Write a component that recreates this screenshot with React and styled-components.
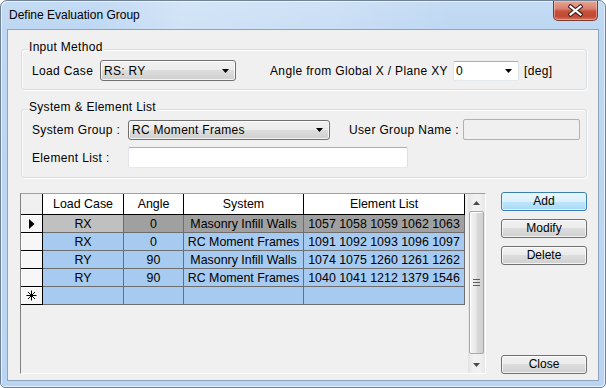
import React from 'react';
import styled, { createGlobalStyle } from 'styled-components';

const GlobalStyle = createGlobalStyle`
  html, body { margin: 0; padding: 0; background: #ffffff; }
  body { font-family: "Liberation Sans", Arial, sans-serif; font-size: 12px; color: #000; }
  *, *::before, *::after { box-sizing: border-box; }
`;

const Window = styled.div`
  width: 606px;
  height: 388px;
  border: 1px solid #6f8298;
  border-radius: 7px 7px 5px 5px;
  background: linear-gradient(180deg, #c4dbf4 0px, #bed7f2 30px, #bad5f3 100%);
  box-shadow: inset 1px 1px 0 #e6f0fb, inset -1px -1px 0 #e6f0fb;
  padding: 0 6px 6px 6px;
  display: flex;
  flex-direction: column;
  overflow: hidden;
`;

const TitleBar = styled.div`
  height: 28px;
  display: flex;
  align-items: center;
  margin: 0 -6px;
  padding: 0 7px 0 8px;
  background: linear-gradient(100deg, rgba(255,255,255,0) 15%, rgba(255,255,255,0.28) 30%, rgba(255,255,255,0.18) 55%, rgba(255,255,255,0) 75%);
`;

const Title = styled.span`
  line-height: 14px;
  color: #000;
`;

const CloseBtn = styled.div`
  margin-left: auto;
  align-self: flex-start;
  width: 45px;
  height: 20px;
  border: 1px solid #7a3a30;
  border-top: none;
  border-radius: 0 0 5px 5px;
  background: linear-gradient(180deg, #e8a595 0%, #d98271 40%, #c8503a 55%, #c24a33 80%, #d2725c 100%);
  box-shadow: inset 0 0 0 1px rgba(255, 220, 210, 0.45);
  display: flex;
  align-items: center;
  justify-content: center;
`;

const Client = styled.div`
  flex: 1;
  background: #f0f0f0;
  border: 1px solid #8fa3bb;
  display: flex;
  flex-direction: column;
  padding: 19px 11px 6px 13px;
`;

const GroupBox = styled.div`
  position: relative;
  border: 1px solid #d5dfe5;
  border-radius: 3px;
  box-shadow: inset 1px 1px 0 #ffffff, 1px 1px 0 #ffffff;
  padding: ${p => p.$pad};
  display: flex;
  flex-direction: column;
  gap: ${p => p.$gap || 0}px;
  & + & { margin-top: 19px; }
`;

const Caption = styled.span`
  position: absolute;
  top: -10px;
  left: 6px;
  padding: 0 1px;
  background: #f0f0f0;
  line-height: 14px;
  letter-spacing: 0.3px;
  white-space: nowrap;
`;

const Row = styled.div`
  display: flex;
  align-items: center;
  height: 21px;
`;

const Label = styled.span`
  width: ${p => (p.$w ? `${p.$w}px` : 'auto')};
  margin-left: ${p => p.$ml || 0}px;
  flex-shrink: 0;
  line-height: 14px;
  letter-spacing: 0.35px;
  white-space: nowrap;
`;

const ComboButton = styled.div`
  width: ${p => p.$w}px;
  height: ${p => p.$h}px;
  border: 1px solid #707070;
  border-radius: 3px;
  background: linear-gradient(180deg, #f2f2f2 0%, #ebebeb 50%, #dddddd 50%, #cfcfcf 100%);
  box-shadow: inset 0 0 0 1px rgba(255, 255, 255, 0.75);
  display: flex;
  align-items: center;
  justify-content: space-between;
  padding: 0 6px 0 3px;
  letter-spacing: 0.3px;
  line-height: 14px;
`;

const ComboEdit = styled.div`
  width: ${p => p.$w}px;
  height: ${p => p.$h}px;
  background: #ffffff;
  border: 1px solid;
  border-color: #abadb3 #dbdfe6 #e3e9ef #e2e3ea;
  border-radius: 2px;
  display: flex;
  align-items: center;
  justify-content: space-between;
  padding: 0 6px 0 2px;
  line-height: 14px;
`;

const TextBox = styled.div`
  width: ${p => p.$w}px;
  height: 21px;
  margin-left: ${p => p.$ml || 0}px;
  background: ${p => (p.$disabled ? '#f0f0f0' : '#ffffff')};
  border: 1px solid;
  border-color: ${p => (p.$disabled ? '#adb2b5' : '#abadb3 #dbdfe6 #e3e9ef #e2e3ea')};
  border-radius: 2px;
`;

const Bottom = styled.div`
  margin-top: 15px;
  margin-left: -1px;
  display: flex;
  gap: 15px;
  height: 181px;
`;

const Grid = styled.div`
  width: 466px;
  height: 181px;
  border: 1px solid;
  border-color: #a0a0a0 #ffffff #ffffff #808080;
  background: #f0f0f0;
  display: flex;
  font-size: 12.4px;
`;

const Table = styled.div`
  width: 447px;
  display: grid;
  grid-template-columns: 22px 81px 60px 120px 161px;
  grid-template-rows: 21px;
  grid-auto-rows: 18px;
  align-content: start;
`;

const HeaderCell = styled.div`
  background: ${p => (p.$corner ? '#f0f0f0' : '#ffffff')};
  border-right: 1px solid #000;
  border-bottom: 1px solid #000;
  text-align: center;
  line-height: 19px;
  padding-top: 1px;
  white-space: nowrap;
`;

const RowHeader = styled.div`
  background: #f7f7f7;
  border-right: 1px solid #000;
  border-bottom: 1px solid #000;
  box-shadow: inset 1px 1px 0 #ffffff;
  display: flex;
  align-items: center;
  justify-content: center;
`;

const Cell = styled.div`
  background: ${p => p.$bg};
  border-right: 1px solid #6e6e6e;
  border-bottom: 1px solid #6e6e6e;
  text-align: center;
  line-height: 15px;
  padding-top: 2px;
  white-space: nowrap;
  overflow: hidden;
`;

const ScrollBar = styled.div`
  width: 17px;
  display: flex;
  flex-direction: column;
  background: linear-gradient(90deg, #e3e3e3 0%, #f1f1f1 30%, #f1f1f1 70%, #e6e6e6 100%);
`;

const ScrollArrow = styled.div`
  height: 17px;
  display: flex;
  align-items: center;
  justify-content: center;
  flex-shrink: 0;
`;

const Thumb = styled.div`
  height: 143px;
  margin: 0 1px;
  border: 1px solid #a9a9a9;
  border-radius: 2px;
  background: linear-gradient(90deg, #f4f4f4 0%, #e9e9e9 45%, #d9d9d9 55%, #d0d0d0 100%);
  box-shadow: inset 1px 1px 0 #ffffff;
  display: flex;
  align-items: center;
  justify-content: center;
`;

const Track = styled.div`
  flex: 1;
`;

const ButtonCol = styled.div`
  width: 86px;
  margin-top: -1px;
  display: flex;
  flex-direction: column;
  gap: 8px;
`;

const Button = styled.button`
  width: 86px;
  height: 19px;
  padding: 0;
  margin: 0;
  font-family: inherit;
  font-size: 12px;
  line-height: 15px;
  color: #000;
  border: 1px solid ${p => (p.$default ? '#3c7fb1' : '#707070')};
  border-radius: 3px;
  background: ${p =>
    p.$default
      ? 'linear-gradient(180deg, #eaf6fd 0%, #d9f0fc 50%, #bee6fd 50%, #a7d9f5 100%)'
      : 'linear-gradient(180deg, #f2f2f2 0%, #ebebeb 50%, #dddddd 50%, #cfcfcf 100%)'};
  box-shadow: inset 0 0 0 1px ${p => (p.$default ? 'rgba(220,245,255,0.9)' : 'rgba(255,255,255,0.75)')};
  &:last-child { margin-top: auto; }
`;

const DropArrow = () => (
  <svg width="7" height="4" viewBox="0 0 7 4">
    <path d="M0 0H7L3.5 4Z" fill="#000" />
  </svg>
);

const CloseIcon = () => (
  <svg width="15" height="13" viewBox="0 0 15 13">
    <path d="M2.5 2.5L12.5 10.5M12.5 2.5L2.5 10.5" stroke="#3a1f1a" strokeWidth="4.2" strokeLinecap="square" />
    <path d="M2.5 2.5L12.5 10.5M12.5 2.5L2.5 10.5" stroke="#ffffff" strokeWidth="2.2" strokeLinecap="square" />
  </svg>
);

const CurrentMark = () => (
  <svg width="6" height="10" viewBox="0 0 6 10">
    <path d="M0 0L5.5 5L0 10Z" fill="#000" />
  </svg>
);

const NewMark = () => (
  <svg width="11" height="11" viewBox="0 0 11 11">
    <path d="M5.5 0.5V10.5M0.5 5.5H10.5M2 2L9 9M9 2L2 9" stroke="#000" strokeWidth="1" />
  </svg>
);

const ArrowUp = () => (
  <svg width="7" height="4" viewBox="0 0 7 4">
    <path d="M0 4H7L3.5 0Z" fill="#4a4a4a" />
  </svg>
);

const ArrowDown = () => (
  <svg width="7" height="4" viewBox="0 0 7 4">
    <path d="M0 0H7L3.5 4Z" fill="#4a4a4a" />
  </svg>
);

const Grip = () => (
  <svg width="7" height="7" viewBox="0 0 7 7">
    <path d="M0 0.5H7M0 3.5H7M0 6.5H7" stroke="#5e5e5e" strokeWidth="1" />
  </svg>
);

const rows = [
  { lc: 'RX', angle: '0', system: 'Masonry Infill Walls', list: '1057 1058 1059 1062 1063', current: true },
  { lc: 'RX', angle: '0', system: 'RC Moment Frames', list: '1091 1092 1093 1096 1097' },
  { lc: 'RY', angle: '90', system: 'Masonry Infill Walls', list: '1074 1075 1260 1261 1262' },
  { lc: 'RY', angle: '90', system: 'RC Moment Frames', list: '1040 1041 1212 1379 1546' },
];

const BLUE = '#a6caf0';

export default function App() {
  return (
    <>
      <GlobalStyle />
      <Window>
        <TitleBar>
          <Title>Define Evaluation Group</Title>
          <CloseBtn>
            <CloseIcon />
          </CloseBtn>
        </TitleBar>
        <Client>
          <GroupBox $pad="10px 0 8px 10px">
            <Caption>Input Method</Caption>
            <Row>
              <Label $w={68}>Load Case</Label>
              <ComboButton $w={136} $h={21}>
                <span>RS: RY</span>
                <DropArrow />
              </ComboButton>
              <Label $w={183} $ml={34}>Angle from Global X / Plane XY</Label>
              <ComboEdit $w={66} $h={20}>
                <span>0</span>
                <DropArrow />
              </ComboEdit>
              <Label $ml={5}>[deg]</Label>
            </Row>
          </GroupBox>
          <GroupBox $pad="9px 0 9px 10px" $gap={7}>
            <Caption>System &amp; Element List</Caption>
            <Row>
              <Label $w={96}>System Group :</Label>
              <ComboButton $w={202} $h={20}>
                <span>RC Moment Frames</span>
                <DropArrow />
              </ComboButton>
              <Label $w={114} $ml={19}>User Group Name :</Label>
              <TextBox $w={117} $disabled />
            </Row>
            <Row>
              <Label $w={96}>Element List :</Label>
              <TextBox $w={280} />
            </Row>
          </GroupBox>
          <Bottom>
            <Grid>
              <Table>
                <HeaderCell $corner />
                <HeaderCell>Load Case</HeaderCell>
                <HeaderCell>Angle</HeaderCell>
                <HeaderCell>System</HeaderCell>
                <HeaderCell>Element List</HeaderCell>
                {rows.map((r, i) => (
                  <React.Fragment key={i}>
                    <RowHeader>{r.current ? <CurrentMark /> : null}</RowHeader>
                    <Cell $bg={r.current ? '#c0c0c0' : BLUE}>{r.lc}</Cell>
                    <Cell $bg={r.current ? '#a0a0a0' : BLUE}>{r.angle}</Cell>
                    <Cell $bg={r.current ? '#a0a0a0' : BLUE}>{r.system}</Cell>
                    <Cell $bg={r.current ? '#a0a0a0' : BLUE}>{r.list}</Cell>
                  </React.Fragment>
                ))}
                <RowHeader>
                  <NewMark />
                </RowHeader>
                <Cell $bg={BLUE} />
                <Cell $bg={BLUE} />
                <Cell $bg={BLUE} />
                <Cell $bg={BLUE} />
              </Table>
              <ScrollBar>
                <ScrollArrow>
                  <ArrowUp />
                </ScrollArrow>
                <Thumb>
                  <Grip />
                </Thumb>
                <Track />
                <ScrollArrow>
                  <ArrowDown />
                </ScrollArrow>
              </ScrollBar>
            </Grid>
            <ButtonCol>
              <Button $default>Add</Button>
              <Button>Modify</Button>
              <Button>Delete</Button>
              <Button>Close</Button>
            </ButtonCol>
          </Bottom>
        </Client>
      </Window>
    </>
  );
}
